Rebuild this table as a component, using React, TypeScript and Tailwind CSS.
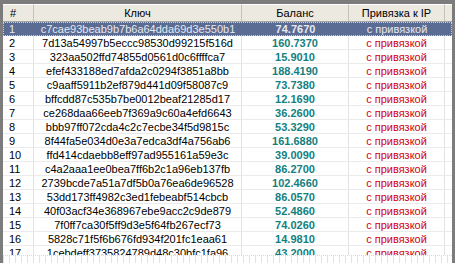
const rows = [
  ['c7cae93beab9b7b6a64dda69d3e550b1', '74.7670'],
  ['7d13a54997b5eccc98530d99215f516d', '160.7370'],
  ['323aa502ffd74855d0561d0c6ffffca7', '15.9010'],
  ['efef433188ed7afda2c0294f3851a8bb', '188.4190'],
  ['c9aaff5911b2ef879d441d09f58087c9', '73.7380'],
  ['bffcdd87c535b7be0012beaf21285d17', '12.1690'],
  ['ce268daa66eeb7f369a9c60a4efd6643', '36.2600'],
  ['bbb97ff072cda4c2c7ecbe34f5d9815c', '53.3290'],
  ['8f44fa5e034d0e3a7edca3df4a756ab6', '161.6880'],
  ['ffd414cdaebb8eff97ad955161a59e3c', '39.0090'],
  ['c4a2aaa1ee0bea7ff6b2c1a96eb137fb', '86.2700'],
  ['2739bcde7a51a7df5b0a76ea6de96528', '102.4660'],
  ['53dd173ff4982c3ed1febeabf514cbcb', '86.0570'],
  ['40f03acf34e368967ebe9acc2c9de879', '52.4860'],
  ['7f0ff7ca30f5ff9d3e5f64fb267ecf73', '74.0260'],
  ['5828c71f5f6b676fd934f201fc1eaa61', '14.9810'],
  ['1cebdeff3735824789d48c30bfc1fa96', '43.2000'],
];

const cols = 'grid grid-cols-[31px_208px_107px_96px_1fr]';

export default function App() {
  return (
    <div className="w-[455px] h-[263px] overflow-hidden bg-white border-t-[4px] border-l-[3px] border-r-[3px] border-[#7c7c7c] flex flex-col text-[11px] leading-none font-['Liberation_Sans',Arial,sans-serif] text-black">
      {/* header */}
      <div className={`${cols} h-[18px] shrink-0 bg-[#ebe9e0] border-b border-[#a8a79f]`}>
        <div className="flex items-center pl-[7px] pt-[1px] border-r border-[#c5c3b8] border-t border-t-white">#</div>
        <div className="flex items-center justify-center pt-[1px] border-r border-[#c5c3b8] border-t border-t-white">Ключ</div>
        <div className="flex items-center justify-center pt-[1px] border-r border-[#c5c3b8] border-t border-t-white">Баланс</div>
        <div className="flex items-center justify-center pt-[1px] border-r border-[#c5c3b8] border-t border-t-white">Привязка к IP</div>
        <div className="border-t border-t-white" />
      </div>

      {/* body */}
      <div className="h-[233px] shrink-0 overflow-hidden">
        {rows.map(([key, bal], i) => {
          const sel = i === 0;
          return (
            <div
              key={key}
              className={`${cols} h-[14px] border-b ${sel ? 'bg-[#5a6c93] text-[#e6e9f0] border-[#5a6c93] outline outline-1 outline-dotted outline-offset-[-1px] outline-[#c9d0df]' : 'border-[#ebebeb]'}`}
            >
              <div className={`flex items-center pl-[6px] pt-[1px] ${sel ? '' : 'border-r border-[#e2e2e2]'}`}>{i + 1}</div>
              <div className={`flex items-center justify-center pt-[1px] ${sel ? '' : 'border-r border-[#e2e2e2]'}`}>{key}</div>
              <div className={`flex items-center justify-center pt-[1px] font-bold ${sel ? '' : 'text-[#137f7f] border-r border-[#e2e2e2]'}`}>{bal}</div>
              <div className={`flex items-center justify-center pt-[1px] ${sel ? '' : 'text-[#d00010] border-r border-[#e2e2e2]'}`}>с привязкой</div>
              <div />
            </div>
          );
        })}
      </div>

      {/* bottom grid strip */}
      <div className="flex-1 border-t border-dotted border-[#c8c8c8] bg-[repeating-linear-gradient(90deg,#d6d6d6_0px,#d6d6d6_1px,transparent_1px,transparent_6px)] opacity-70" />
    </div>
  );
}
